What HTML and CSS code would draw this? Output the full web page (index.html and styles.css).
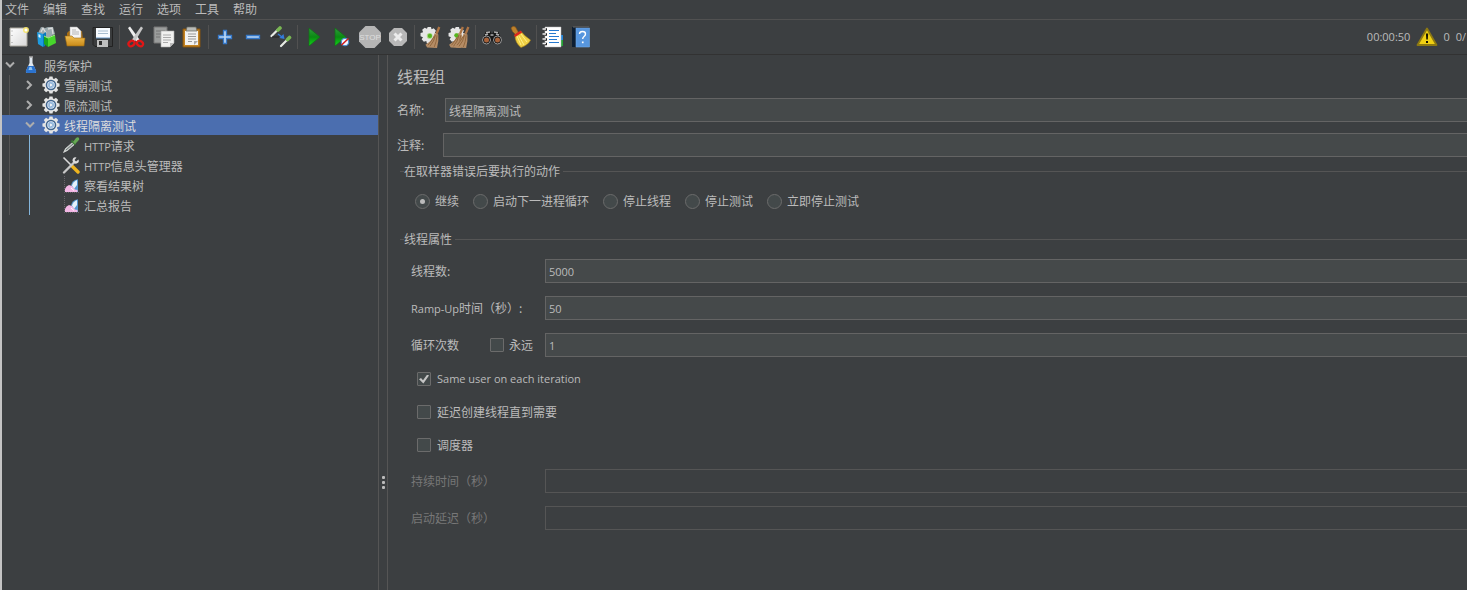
FILE: index.html
```html
<!DOCTYPE html>
<html lang="zh-CN">
<head>
<meta charset="utf-8">
<meta name="viewport" content="width=device-width, initial-scale=1">
<title>线程组</title>
<link rel="stylesheet" href="styles.css">
</head>
<body>
<svg class="defs" aria-hidden="true">
  <defs>
    <linearGradient id="gGreen" x1="0" y1="0" x2="0" y2="1"><stop offset="0" stop-color="#2f9a3c"/><stop offset=".5" stop-color="#0a8a12"/><stop offset="1" stop-color="#12d818"/></linearGradient>
    <linearGradient id="gPaper" x1="0" y1="0" x2="1" y2="1"><stop offset="0" stop-color="#fff"/><stop offset="1" stop-color="#d8d8d8"/></linearGradient>
    <linearGradient id="gGold" x1="0" y1="0" x2="0" y2="1"><stop offset="0" stop-color="#f0bd50"/><stop offset="1" stop-color="#c98a18"/></linearGradient>
    <linearGradient id="gBlue" x1="0" y1="0" x2="0" y2="1"><stop offset="0" stop-color="#8fc4f2"/><stop offset="1" stop-color="#2b73cf"/></linearGradient>
    <symbol id="gear" viewBox="0 0 20 20">
      <path d="M8.300 .5h3.400l.5 2.400 1.200.5 2.100-1.400 2.500 2.500-1.400 2.100 .5 1.200 2.400.500v3.400l-2.400.500-.5 1.200 1.400 2.100-2.500 2.500-2.100-1.400-1.200.500-.5 2.400H8.300l-.5-2.400-1.200-.500-2.100 1.400-2.500-2.500 1.400-2.100-.5-1.200L.5 11.700V8.300l2.400-.500.5-1.200L2 4.500 4.500 2l2.100 1.400 1.200-.5z" fill="#e4e4e4"/>
      <circle cx="10" cy="10" r="5" fill="#f2f5f8" stroke="#41658f" stroke-width="1.700"/><circle cx="10" cy="10" r="3.500" fill="#9fc1e4"/><path d="M8.600 7.500l4 2.500-4 2.500z" fill="#fff" stroke="#5d89ba" stroke-width=".5"/>
    </symbol>
    <symbol id="chart" viewBox="0 0 18 18">
      <path d="M2.500 0v16.500H17" fill="none" stroke="#68646b" stroke-width="1" stroke-dasharray="1 1"/>
      <path d="M9 11q0-5 4-7l3-.8V16H9z" fill="#5596d0"/><path d="M10 9.500q1-4 5-5.500v5l-3 4z" fill="#e5f1fb"/>
      <path d="M3 16v-3q1-3 4-4l3 1 3 3.500 2.500.5v2z" fill="#f3b7e5"/><path d="M9 12l3 2.500" stroke="#fff" stroke-width="1"/>
    </symbol>
    <symbol id="cog" viewBox="0 0 20 20">
      <path d="M7 1h3l.5 2 2-.9 2 2.200-1 1.800 2.200 1v3l-2.200.600.5 2-2.200 2-1.800-1-.8 2.200H6.300l-.6-2.200-2.200.700-2-2.300 1.200-1.800-2.200-1v-3l2.300-.600-.8-2.200 2.300-2 2 1z" fill="#e6e6e6"/>
      <circle cx="8.800" cy="9" r="2.600" fill="#a9d889"/><circle cx="9" cy="9" r="1.900" fill="#57b51f"/>
    </symbol>
    <symbol id="whisk" viewBox="0 0 20 20">
      <path d="M16.500.500l2 .8-2.500 6.200-2-.7z" fill="#ae7545"/>
      <path d="M13.300 6.500l3.400 1.200q.5 6-1.200 12.300l-9-.5-1.500-2.500q6.500-4 8.300-10.500z" fill="#b58c65"/>
      <path d="M14 8q-1 6-5 10.500M15.500 8.500q-.5 6-2.500 10.500M13.200 9q-3 5-6 8.500" stroke="#8c6238" stroke-width=".8" fill="none"/>
    </symbol>
  </defs>
</svg>

<div class="app">
  <nav class="menubar" aria-label="主菜单">
    <button type="button">文件</button><button type="button">编辑</button><button type="button">查找</button><button type="button">运行</button><button type="button">选项</button><button type="button">工具</button><button type="button">帮助</button>
  </nav>

  <div class="toolbar" role="toolbar" aria-label="工具栏">
    <button type="button" class="tool" aria-label="新建"><svg viewBox="0 0 22 22"><path d="M2 2h17v18H2z" fill="url(#gPaper)" stroke="#aaa89f"/><path d="M4 4.500v1M4 9v1M4 16v1" stroke="#999"/><circle cx="18" cy="4" r="3" fill="#f7e66a" opacity=".9"/><circle cx="18" cy="4" r="1.500" fill="#fff"/></svg></button>
    <button type="button" class="tool" aria-label="模板"><svg viewBox="0 0 22 22"><path d="M2 7l3-6 4 1 3-1 5 0 2 7-9 5z" fill="#9aa9ad"/><path d="M5 6l2-4 3 5M12 3l4-1 1 6" stroke="#dcdcdc" stroke-width="1.300" fill="none"/><path d="M1 6l6 2v13l-5-3z" fill="#1d9be0"/><path d="M7 8l3-2v5l-1 9-2 1z" fill="#0879bd"/><path d="M2.500 8l2 1v3l-2-1z" fill="#def3ff"/><path d="M8 10l4 2v9l-4-3z" fill="#19a51d"/><path d="M12 12l7-3 1 8-8 4z" fill="#47d62c"/><path d="M8 10l4 2 7-3" stroke="#9df37f" fill="none"/></svg></button>
    <button type="button" class="tool" aria-label="打开"><svg viewBox="0 0 22 22"><path d="M3 7l2-2h13l1 8H3z" fill="#a76d12"/><path d="M6 1h7l4 4v8H6z" fill="#f5f5f5" stroke="#aaa" stroke-width=".5"/><path d="M8 4h4M8 6h7M8 8h7" stroke="#b5b5b5"/><path d="M1 10h7l2 2h11l-1 8H3z" fill="url(#gGold)" stroke="#9b6811" stroke-width=".6"/></svg></button>
    <button type="button" class="tool" aria-label="保存"><svg viewBox="0 0 22 22"><path d="M1 1.500h19.500v19H3l-2-2z" fill="#3a3c3d" stroke="#222"/><path d="M4 2h14v10H4z" fill="#f7fbff"/><path d="M6 5h10M6 7.500h10" stroke="#a7bdcf"/><path d="M4 12h14" stroke="#6695c4"/><path d="M5 14h11v7H5z" fill="#bfc0c0"/><path d="M7 15h3v4H7z" fill="#303030"/></svg></button>
    <span class="separator"></span>
    <button type="button" class="tool" aria-label="剪切"><svg viewBox="0 0 22 22"><path d="M3 2l2-1.500 9.500 13-3 2z" fill="#eee"/><path d="M18 2l-2-1.500-9 13 3 2z" fill="#c7c7c7"/><ellipse cx="6.500" cy="17.500" rx="3.200" ry="2.500" fill="none" stroke="#e01616" stroke-width="2.300" transform="rotate(-35 6.500 17.500)"/><ellipse cx="15" cy="17.500" rx="3.200" ry="2.500" fill="none" stroke="#e01616" stroke-width="2.300" transform="rotate(35 15 17.500)"/></svg></button>
    <button type="button" class="tool" aria-label="复制"><svg viewBox="0 0 22 22"><path d="M1 1h13v16H1z" fill="#9b9d9c" stroke="#777"/><path d="M3 5h9M3 8h5M3 11h4" stroke="#777"/><path d="M8 5h13v12l-4 4H8z" fill="#f1f1f0" stroke="#aaa" stroke-width=".6"/><path d="M10 9h8M10 11.500h8M10 14h8M10 16.500h5" stroke="#aaa"/><path d="M17 21v-4h4z" fill="#bbb"/></svg></button>
    <button type="button" class="tool" aria-label="粘贴"><svg viewBox="0 0 22 22"><path d="M2 3h17v18H2z" fill="#c48321" stroke="#855411"/><path d="M4 5h13v14H4z" fill="#f2f2f1"/><path d="M6 1h9l1 4H5z" fill="#b9bbb7" stroke="#66675f" stroke-width=".7"/><path d="M7 8h8M7 10.500h8M7 13h8M7 15.500h4" stroke="#999"/><path d="M13 19v-4h4z" fill="#aaa"/></svg></button>
    <span class="separator"></span>
    <button type="button" class="tool" aria-label="展开"><svg viewBox="0 0 22 22"><path d="M9.500 4.500h3v5h5v3h-5v5h-3v-5h-5v-3h5z" fill="#b9d6f5" stroke="#3679c9" stroke-width="1.300"/></svg></button>
    <button type="button" class="tool" aria-label="折叠"><svg viewBox="0 0 22 22"><path d="M4.500 9.500h13v3h-13z" fill="#b9d6f5" stroke="#3679c9" stroke-width="1.300"/></svg></button>
    <button type="button" class="tool" aria-label="切换"><svg viewBox="0 0 22 22"><path d="M1.500 10l6-6" stroke="#e8ebe5" stroke-width="2.200" stroke-linecap="round"/><path d="M8 4l2-2" stroke="#79b653" stroke-width="3.600" stroke-linecap="round"/><path d="M11 20l6-6" stroke="#e8ebe5" stroke-width="2.200" stroke-linecap="round"/><path d="M17.500 13.500l2-2" stroke="#79b653" stroke-width="3.600" stroke-linecap="round"/><path d="M8 8l4 3" stroke="#337bdc" stroke-width="1.400"/><path d="M14.500 13l-5-1 4-4z" fill="#337bdc"/><path d="M2 11h7" stroke="#222"/></svg></button>
    <span class="separator"></span>
    <button type="button" class="tool" aria-label="启动"><svg viewBox="0 0 22 22"><path d="M6 2l11 9-11 9z" fill="url(#gGreen)" stroke="#126d18" stroke-width=".7"/></svg></button>
    <button type="button" class="tool" aria-label="无间隔启动"><svg viewBox="0 0 22 22"><path d="M4 2l11 9-11 9z" fill="url(#gGreen)" stroke="#126d18" stroke-width=".7"/><circle cx="14" cy="16" r="3.700" fill="#f5f9ff" stroke="#4e8ece" stroke-width="1.200"/><path d="M10.500 19l7-6.500" stroke="#d31d1d" stroke-width="1.600"/></svg></button>
    <button type="button" class="tool stop" aria-label="停止"><svg viewBox="0 0 22 22"><path d="M6.500 0h9L22 6.500v9L15.500 22h-9L0 15.500v-9z" fill="#b5b5b5"/><text x="11" y="14" text-anchor="middle">STOP</text></svg></button>
    <button type="button" class="tool" aria-label="关闭"><svg viewBox="0 0 22 22"><path d="M7 2h8l5 5v8l-5 5H7l-5-5V7z" fill="#b8b8b8"/><path d="M7.500 7.500l7 7M14.500 7.500l-7 7" stroke="#ececec" stroke-width="3"/></svg></button>
    <span class="separator"></span>
    <button type="button" class="tool" aria-label="清除"><svg viewBox="0 0 20 20"><use href="#cog"/><use href="#whisk"/></svg></button>
    <button type="button" class="tool" aria-label="清除全部"><svg viewBox="0 0 20 20"><use href="#cog"/><use href="#whisk" x="-4"/><use href="#whisk" x="1"/><circle cx="7.500" cy="8.500" r="1.800" fill="#57b51f"/></svg></button>
    <span class="separator"></span>
    <button type="button" class="tool" aria-label="查找"><svg viewBox="0 0 22 22"><path d="M5 5l4 0 2 3 2-3h4l4 9-4 4h-4l-2-4-2 4H5l-4-4z" fill="#171717"/><path d="M5 6.500l4-.5M13 6l4 .5M9.500 9h3M4 9l3-1M15 8l3 1" stroke="#b0b0b0" stroke-width="1.600"/><circle cx="5.500" cy="14" r="4" fill="#151515" stroke="#999"/><circle cx="16.500" cy="14" r="4" fill="#151515" stroke="#999"/><circle cx="5.500" cy="14" r="2.500" fill="#a8623a"/><circle cx="16.500" cy="14" r="2.500" fill="#a8623a"/></svg></button>
    <button type="button" class="tool" aria-label="重置查找"><svg viewBox="0 0 22 22"><path d="M2 2q2-3 4.500-1l3 5.500-3 2-3-3z" fill="#bd812c" stroke="#855316" stroke-width=".6"/><path d="M6 9l6-3.500q4 5 9.500 8.500-2 5-9.500 7.500Q6 17 6 9z" fill="#efd044" stroke="#b58c15" stroke-width=".6"/><path d="M8 10l4 9M10 10l5 9M12 8l6 8" stroke="#fff086" fill="none"/><path d="M5.500 10l7-4.500" stroke="#da271c" stroke-width="2.600"/></svg></button>
    <span class="separator"></span>
    <button type="button" class="tool" aria-label="函数助手"><svg viewBox="0 0 22 22"><path d="M18 9h3v5h-3z" fill="#2486da"/><path d="M18 14h3v6h-3z" fill="#25a335"/><path d="M3 1h16v20H3z" fill="#fff" stroke="#bbb" stroke-width=".5"/><path d="M7 4.500h10M7 7.500h7M7 10.500h10M7 13.500h8M7 16.500h10" stroke="#2679cf" stroke-width="1.200"/><path d="M3 3.500h2M3 8.500h2M3 13.500h2M3 18h2" stroke="#222" stroke-width="2.400"/><path d="M.5 3h3.500M.5 8h3.500M.5 13h3.500M.5 17.500h3.500" stroke="#eee" stroke-width="1.500"/></svg></button>
    <button type="button" class="tool" aria-label="帮助"><svg viewBox="0 0 22 22"><path d="M2 1h17v20H2z" fill="#0d1e32"/><path d="M6 2h13.500v19H6z" fill="#5796de" stroke="#6fa8e6" stroke-width=".6"/><path d="M3 1h16" stroke="#666"/><path d="M9.500 8q0-2.500 3-2.500t3 2.500q0 1.500-1.700 2.700-1.100.8-1.100 2.300" fill="none" stroke="#fff" stroke-width="1.400"/><path d="M11.900 15.500h1.700v1.700h-1.700z" fill="#fff"/></svg></button>
    <div class="status latin">
      <span>00:00:50</span>
      <svg viewBox="0 0 22 22" aria-hidden="true"><path d="M11 2.500l9.500 16.500h-19z" fill="#f0d013" stroke="#8d7912" stroke-width="1.800" stroke-linejoin="round"/><path d="M9.900 7.500h2.300l-.4 6h-1.500zM10 15h2v2h-2z" fill="#171400"/></svg>
      <span>0</span><span class="threads">0/</span>
    </div>
  </div>

  <div class="workspace">
    <aside class="sidebar" aria-label="测试计划">
      <ul class="tree">
        <li>
          <div class="node"><svg class="chevron" viewBox="0 0 10 10"><path d="M1 2.500l4 4 4-4"/></svg><svg class="node-icon" viewBox="0 0 18 18"><path d="M7.500 1h3v6l3.500 8q.5 2-1.500 2h-7q-2 0-1.500-2l3.500-8z" fill="#dfe8ef"/><path d="M6 10h6l2.200 5q.5 2-1.500 2H5.300q-2 0-1.500-2z" fill="#2b73cf"/><path d="M7.500 11h2l1 3h-4z" fill="#8fc4f2"/><path d="M7 1h4" stroke="#aaa" stroke-width="1.500"/></svg><span>服务保护</span></div>
          <ul class="branch">
            <li><div class="node"><svg class="chevron" viewBox="0 0 10 10"><path d="M2 1l4 4-4 4"/></svg><svg class="node-icon"><use href="#gear"/></svg><span>雪崩测试</span></div></li>
            <li><div class="node"><svg class="chevron" viewBox="0 0 10 10"><path d="M2 1l4 4-4 4"/></svg><svg class="node-icon"><use href="#gear"/></svg><span>限流测试</span></div></li>
            <li>
              <div class="node selected"><svg class="chevron" viewBox="0 0 10 10"><path d="M1 2.500l4 4 4-4"/></svg><svg class="node-icon"><use href="#gear"/></svg><span>线程隔离测试</span></div>
              <ul class="leaves">
                <li><div class="node"><svg class="node-icon" viewBox="0 0 18 18"><path d="M1.500 16.500l2-4 7-6 2 2-7 6z" fill="#c4cbc7" stroke="#ededed" stroke-width=".6"/><path d="M4 14l7-6" stroke="#697270"/><path d="M9.500 4.500l4 4" stroke="#397334" stroke-width="2.300"/><path d="M11 6l3-4q2-1.500 3 0t-1 3l-3 3z" fill="#66a953"/></svg><span><span class="latin">HTTP</span>请求</span></div></li>
                <li><div class="node"><svg class="node-icon" viewBox="0 0 18 18"><path d="M1.500 1.500l9 9" stroke="#d9d9d9" stroke-width="1.600"/><path d="M10.500 10.500l5.500 5.500" stroke="#efb51e" stroke-width="3.400" stroke-linecap="round"/><path d="M2 16.500L12.500 6" stroke="#c8c8c8" stroke-width="2.300" stroke-linecap="round"/><path d="M16.500 3.500l-2.500 2-1.500-1.500 2-2.500q-4-1-4 3.500 2 4 5 2 2-1 1-3.500z" fill="#ddd"/></svg><span><span class="latin">HTTP</span>信息头管理器</span></div></li>
                <li><div class="node"><svg class="node-icon"><use href="#chart"/></svg><span>察看结果树</span></div></li>
                <li><div class="node"><svg class="node-icon"><use href="#chart"/></svg><span>汇总报告</span></div></li>
              </ul>
            </li>
          </ul>
        </li>
      </ul>
    </aside>
    <div class="splitter" role="separator" aria-orientation="vertical"><i></i><i></i><i></i></div>

    <main class="editor">
      <form>
        <h1>线程组</h1>
        <div class="field name-field"><label for="name">名称:</label><input id="name" type="text" value="线程隔离测试"></div>
        <div class="field comment-field"><label for="comment">注释:</label><input id="comment" type="text"></div>
        <fieldset class="actions">
          <legend>在取样器错误后要执行的动作</legend>
          <div class="radios">
            <label><input type="radio" name="action" checked>继续</label>
            <label><input type="radio" name="action">启动下一进程循环</label>
            <label><input type="radio" name="action">停止线程</label>
            <label><input type="radio" name="action">停止测试</label>
            <label><input type="radio" name="action">立即停止测试</label>
          </div>
        </fieldset>
        <fieldset class="properties">
          <legend>线程属性</legend>
          <div class="rows">
            <div class="row"><label for="threads">线程数:</label><input class="latin" id="threads" type="text" value="5000"></div>
            <div class="row"><label for="ramp"><span class="latin">Ramp-Up</span>时间（秒）:</label><input class="latin" id="ramp" type="text" value="50"></div>
            <div class="row"><div class="loop"><label for="loops">循环次数</label><label class="check"><input type="checkbox">永远</label></div><input class="latin" id="loops" type="text" value="1"></div>
          </div>
          <div class="checks">
            <label class="check latin"><input type="checkbox" checked>Same user on each iteration</label>
            <label class="check"><input type="checkbox">延迟创建线程直到需要</label>
            <label class="check"><input type="checkbox">调度器</label>
          </div>
          <div class="rows">
            <div class="row"><label class="off" for="duration">持续时间（秒）</label><input id="duration" type="text" disabled></div>
            <div class="row"><label class="off" for="delay">启动延迟（秒）</label><input id="delay" type="text" disabled></div>
          </div>
        </fieldset>
      </form>
    </main>
  </div>
</div>
</body>
</html>
```

FILE: styles.css
```css
* { box-sizing: border-box; }

body {
  margin: 0;
  background: #3c3f41;
  color: #bbb;
  font: 12px/20px "Noto Sans CJK SC", sans-serif;
}

button, input { font: inherit; color: inherit; }
ul { margin: 0; padding: 0; list-style: none; }
.defs { position: absolute; width: 0; height: 0; }
.latin { font-family: "Open Sans", "Noto Sans CJK SC", sans-serif; font-size: 11px; }

.app {
  display: flex;
  flex-direction: column;
  min-height: 100vh;
  border-left: 2px solid #c4c4c4;
  overflow: hidden;
}

/* Menu and toolbar */
.menubar {
  display: flex;
  align-items: flex-start;
  gap: 14px;
  height: 20px;
  padding-left: 3px;
  border-bottom: 1px solid #515151;
}
.menubar button { padding: 0; border: 0; background: none; line-height: 18px; white-space: nowrap; }

.toolbar {
  display: flex;
  align-items: center;
  height: 35px;
  padding-left: 3px;
  border-bottom: 1px solid #323232;
}
.tool {
  display: flex;
  flex: none;
  align-items: center;
  justify-content: center;
  width: 28px;
  height: 28px;
  padding: 0;
  border: 0;
  background: none;
}
.tool svg { width: 22px; height: 22px; }
.stop text { font: 8px "Liberation Sans", sans-serif; fill: #dedede; }
.separator { flex: none; width: 1px; height: 24px; margin: 0 2px; background: #515151; }
.status { display: flex; align-items: center; gap: 5px; margin-left: auto; padding-right: 1px; white-space: nowrap; }
.status svg { width: 22px; height: 22px; margin-left: 1px; }
.threads { margin-left: 1px; }

/* Test plan tree */
.workspace { display: flex; flex: 1; }
.sidebar { flex: none; width: 377px; border-right: 1px solid #555; }
.node { display: flex; align-items: center; height: 20px; padding-left: 3px; line-height: 18px; white-space: nowrap; }
.node > span { padding-top: 2px; }
.chevron { width: 10px; height: 10px; margin-right: 7px; }
.chevron path { fill: none; stroke: #adadad; stroke-width: 2; }
.node-icon { width: 18px; height: 18px; margin-right: 4px; }
.branch { background: linear-gradient(#555, #555) 7px 0 / 1px 100% no-repeat; }
.branch .node { padding-left: 23px; }
.leaves { background: linear-gradient(#84b5db, #84b5db) 27px 0 / 1px 100% no-repeat; }
.leaves .node { padding-left: 60px; }
.node.selected { background: #4b6eaf; color: #ddd; }

.splitter {
  display: flex;
  flex: none;
  flex-direction: column;
  align-items: center;
  justify-content: flex-end;
  gap: 2px;
  width: 9px;
  padding-bottom: 101px;
  border-right: 1px solid #555;
}
.splitter i { width: 3px; height: 3px; border-radius: 1px; background: #bbb; }

/* Thread group editor */
.editor { flex: 1; min-width: 0; padding: 9px 0 0 9px; }
h1 { margin: 0 0 10px; font-size: 16px; font-weight: 400; line-height: 24px; }
.field { display: flex; align-items: center; }
.field label { flex: none; }
.name-field label { width: 48px; }
.comment-field label { width: 46px; }
.name-field { margin-bottom: 11px; }

input[type="text"] {
  flex: 1;
  min-width: 0;
  height: 24px;
  padding: 0 3px;
  border: 1px solid #646464;
  border-right: 0;
  border-radius: 0;
  background: #45494a;
  outline: 0;
}
input[type="text"]:disabled { border-color: #555; background: #3c3f41; }

fieldset { min-width: 0; margin: 0 0 0 3px; padding: 0; border: 0; border-top: 1px solid #555; }
legend { margin-left: 4px; padding: 0 3px 0 0; line-height: 20px; }
.actions { margin-top: 4px; }
.radios { display: flex; flex-wrap: wrap; gap: 14px; padding: 10px 0 0 15px; }
.radios label, .check { display: flex; align-items: center; gap: 5px; white-space: nowrap; }

input[type="radio"], input[type="checkbox"] {
  flex: none;
  display: grid;
  place-items: center;
  appearance: none;
  margin: 0;
  border: 1px solid #6b6b6b;
  background: #43494a;
}
input[type="radio"] { width: 15px; height: 15px; border-radius: 50%; }
input[type="radio"]:checked::before { content: ""; width: 5px; height: 5px; border-radius: 50%; background: #bbb; }
input[type="checkbox"] { width: 14px; height: 14px; border-radius: 1px; }
input[type="checkbox"]:checked::before {
  content: "";
  width: 10px;
  height: 9px;
  background: #c4c4c4;
  clip-path: polygon(0 52%, 20% 38%, 40% 64%, 82% 0, 100% 12%, 44% 100%);
}

.properties { margin-top: 18px; }
.rows { display: grid; gap: 13px; padding: 10px 0 0 11px; }
.row { display: grid; grid-template-columns: 134px 1fr; align-items: center; }
.loop { display: flex; justify-content: space-between; padding-right: 12px; }
.checks { display: grid; gap: 13px; padding: 12px 0 4px 17px; }
.checks .check { gap: 6px; }
.off { color: #777; }
```
